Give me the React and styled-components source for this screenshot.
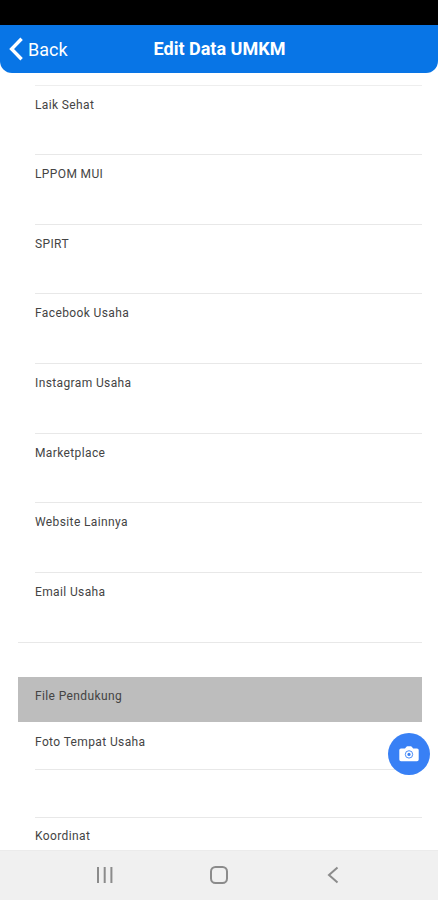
import React from 'react';
import styled, { createGlobalStyle } from 'styled-components';

const fields = [
  { label: 'Laik Sehat', height: 69 },
  { label: 'LPPOM MUI', height: 70 },
  { label: 'SPIRT', height: 69 },
  { label: 'Facebook Usaha', height: 70 },
  { label: 'Instagram Usaha', height: 70 },
  { label: 'Marketplace', height: 69 },
  { label: 'Website Lainnya', height: 70 },
];

function App() {
  return (
    <Screen>
      <GlobalStyle />
      <StatusBar />
      <Header>
        <BackButton>
          <svg width="14" height="24" viewBox="0 0 14 24" fill="none">
            <path d="M12.6 1.8L2.6 12l10 10.2" stroke="#fff" strokeWidth="3.4" />
          </svg>
          <BackText>Back</BackText>
        </BackButton>
        <Title>Edit Data UMKM</Title>
      </Header>
      <Content>
        <Divider />
        {fields.map((field) => (
          <Field key={field.label} $height={field.height}>
            <Label>{field.label}</Label>
          </Field>
        ))}
        <LastField>
          <Label>Email Usaha</Label>
        </LastField>
        <SectionHeader>
          <Label>File Pendukung</Label>
        </SectionHeader>
        <Field $height={48} $top={12}>
          <Label>Foto Tempat Usaha</Label>
        </Field>
        <Field $height={48} />
        <LastLine>
          <Label>Koordinat</Label>
        </LastLine>
      </Content>
      <CameraButton>
        <svg width="20" height="16" viewBox="0 0 20 16">
          <path
            d="M2 2.4h4L7.4.7Q7.8.3 8.3.3h3.6q.5 0 .9.4L14.1 2.4H18q1.7 0 1.7 1.6v9.6q0 1.6-1.7 1.6H2Q.3 15.2.3 13.6V4Q.3 2.4 2 2.4z"
            fill="#fff"
          />
          <circle cx="10" cy="8.4" r="3.7" fill="none" stroke="#3880f5" strokeWidth="0.9" />
          <circle cx="10" cy="8.4" r="1.6" fill="#3880f5" />
        </svg>
      </CameraButton>
      <NavBar>
        <svg width="18" height="18" viewBox="0 0 18 18">
          <path d="M2 1v16M8.7 1v16M15.4 1v16" stroke="#8b8b8b" strokeWidth="2" />
        </svg>
        <svg width="20" height="18" viewBox="0 0 20 18">
          <rect x="2" y="1" width="16" height="16" rx="4.5" fill="none" stroke="#8b8b8b" strokeWidth="2" />
        </svg>
        <svg width="12" height="18" viewBox="0 0 12 18">
          <path d="M10.5 1.5L2 9l8.500 7.500" fill="none" stroke="#8b8b8b" strokeWidth="2" />
        </svg>
      </NavBar>
    </Screen>
  );
}

export default App;

const GlobalStyle = createGlobalStyle`
  body {
    margin: 0;
    background: #fff;
  }
`

const Screen = styled.div`
  position: relative;
  display: flex;
  flex-direction: column;
  height: 900px;
  overflow: hidden;
  background: #fff;
  font-family: Roboto, sans-serif;
`

const StatusBar = styled.div`
  flex: none;
  height: 25px;
  background: #000;
`

const Header = styled.header`
  flex: none;
  display: grid;
  grid-template-columns: 1fr auto 1fr;
  align-items: center;
  box-sizing: border-box;
  height: 47.5px;
  padding: 0 8px 0 9px;
  border-radius: 0 0 12px 12px;
  background: #0875e6;
  color: #fff;
`

const BackButton = styled.div`
  display: flex;
  align-items: center;
  gap: 5px;
`

const BackText = styled.span`
  padding-top: 2px;
  font-size: 18px;
  line-height: 24px;
`

const Title = styled.div`
  font-size: 18px;
  line-height: 24px;
  font-weight: 700;
`

const Content = styled.main`
  flex: 1;
  min-height: 0;
  overflow: hidden;
  padding: 12.5px 16px 0 18px;
`

const Divider = styled.div`
  height: 1px;
  margin-left: 17px;
  background: #eee;
`

const Field = styled.div`
  box-sizing: border-box;
  height: ${(props) => props.$height}px;
  margin-left: 17px;
  padding-top: ${(props) => props.$top || 11}px;
  border-bottom: 1px solid #e8e8e8;
`

const LastField = styled.div`
  box-sizing: border-box;
  height: 70px;
  padding: 11px 0 0 17px;
  border-bottom: 1px solid #e8e8e8;
`

const SectionHeader = styled.div`
  box-sizing: border-box;
  height: 45px;
  margin-top: 34px;
  padding: 11px 0 0 17px;
  background: #bdbdbd;
`

const LastLine = styled.div`
  padding: 10px 0 0 17px;
`

const Label = styled.div`
  color: #444;
  font-size: 12px;
  line-height: 16px;
  letter-spacing: 0.38px;
`

const CameraButton = styled.div`
  position: absolute;
  right: 8px;
  bottom: 125.5px;
  display: flex;
  align-items: center;
  justify-content: center;
  width: 42px;
  height: 42px;
  border-radius: 50%;
  background: #3880f5;
`

const NavBar = styled.nav`
  flex: none;
  display: grid;
  grid-template-columns: repeat(3, 114px);
  align-items: center;
  justify-content: center;
  justify-items: center;
  box-sizing: border-box;
  height: 50px;
  padding-bottom: 1px;
  border-top: 1px solid #ebebeb;
  background: #f0f0f0;
`
